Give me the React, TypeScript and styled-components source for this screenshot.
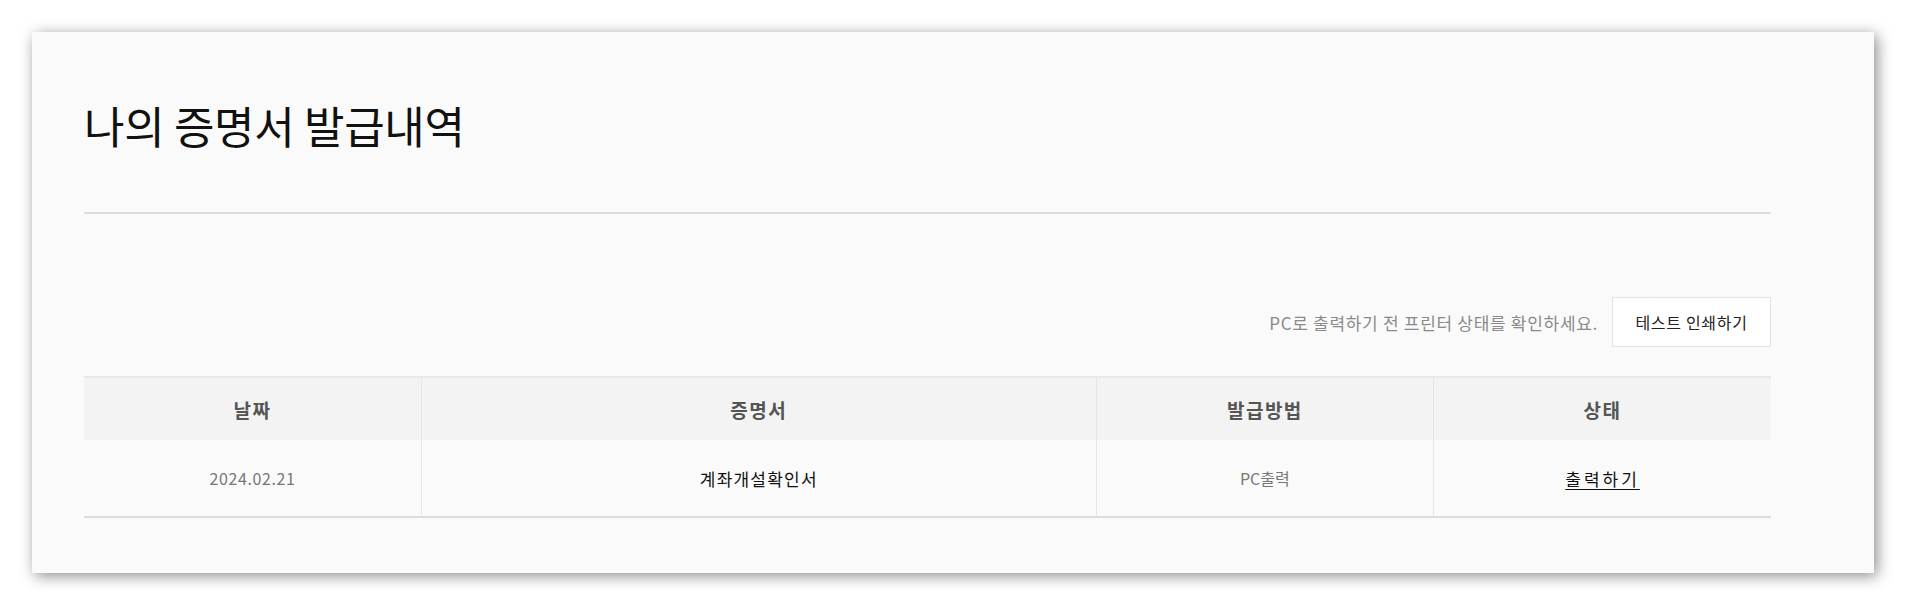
import React from "react";
import styled, { createGlobalStyle } from "styled-components";

const GlobalStyle = createGlobalStyle`
  html, body {
    margin: 0;
    padding: 0;
    background: #ffffff;
    font-family: "Noto Sans CJK KR", "Noto Sans", sans-serif;
  }
`;

interface Certificate {
  date: string;
  name: string;
  method: string;
  status: string;
}

const rows: Certificate[] = [
  { date: "2024.02.21", name: "계좌개설확인서", method: "PC출력", status: "출력하기" },
];

type Tone = "date" | "muted" | "name" | "link";

const spacing: Record<Tone, string> = {
  date: "0.6px",
  muted: "0",
  name: "1.2px",
  link: "3px",
};

const App = (): JSX.Element => {
  return (
    <>
      <GlobalStyle />
      <Page>
        <Panel>
          <Header>
            <h2>나의 증명서 발급내역</h2>
          </Header>

          <Toolbar>
            <p>PC로 출력하기 전 프린터 상태를 확인하세요.</p>
            <button type="button">테스트 인쇄하기</button>
          </Toolbar>

          <HistoryTable>
            <colgroup>
              <col style={{ width: "20%" }} />
              <col style={{ width: "40%" }} />
              <col style={{ width: "20%" }} />
              <col style={{ width: "20%" }} />
            </colgroup>
            <thead>
              <tr>
                <th>날짜</th>
                <th>증명서</th>
                <th>발급방법</th>
                <th>상태</th>
              </tr>
            </thead>
            <tbody>
              {rows.map((row) => (
                <tr key={row.date + row.name}>
                  <Cell tone="date">{row.date}</Cell>
                  <Cell tone="name">{row.name}</Cell>
                  <Cell tone="muted">{row.method}</Cell>
                  <Cell tone="link">
                    <a href="#">{row.status}</a>
                  </Cell>
                </tr>
              ))}
            </tbody>
          </HistoryTable>
        </Panel>
      </Page>
    </>
  );
};

export default App;

const Page = styled.div`
  padding: 32px;
`;

const Panel = styled.section`
  background: #fafafa;
  box-shadow: 3px 3px 14px rgba(0, 0, 0, 0.45);
  padding: 67px 103px 55px 52px;
`;

const Header = styled.div`
  border-bottom: 2px solid #dedede;
  padding-bottom: 61px;

  h2 {
    margin: 0;
    font-size: 44px;
    line-height: 52px;
    font-weight: 400;
    color: #111;
    letter-spacing: -0.3px;
  }
`;

const Toolbar = styled.div`
  display: flex;
  justify-content: flex-end;
  align-items: center;
  gap: 14px;
  margin-top: 83px;

  p {
    margin: 0;
    font-size: 17px;
    color: #8a8a8a;
    letter-spacing: 0.7px;
  }

  button {
    width: 159px;
    height: 50px;
    background: #fff;
    border: 1px solid #e3e3e3;
    font-family: inherit;
    font-size: 16px;
    font-weight: 400;
    color: #222;
    letter-spacing: 0.7px;
    cursor: pointer;
  }
`;

const HistoryTable = styled.table`
  width: 100%;
  margin-top: 29px;
  border-collapse: collapse;
  table-layout: fixed;
  border-top: 2px solid #e8e8e8;
  border-bottom: 2px solid #dcdcdc;

  th {
    height: 62px;
    background: #f3f3f3;
    font-size: 19px;
    font-weight: 700;
    color: #555;
    letter-spacing: 1.5px;
    padding: 0;
  }

  th + th,
  td + td {
    border-left: 1px solid #e6e6e6;
  }
`;

const Cell = styled.td<{ tone: Tone }>`
  height: 76px;
  padding: 0;
  text-align: center;
  font-size: ${(props) => (props.tone === "name" || props.tone === "link" ? "17px" : "16px")};
  letter-spacing: ${(props) => spacing[props.tone]};
  color: ${(props) => (props.tone === "name" || props.tone === "link" ? "#111" : "#777")};

  a {
    color: #111;
    text-decoration: underline;
    text-underline-offset: 3px;
  }
`;
